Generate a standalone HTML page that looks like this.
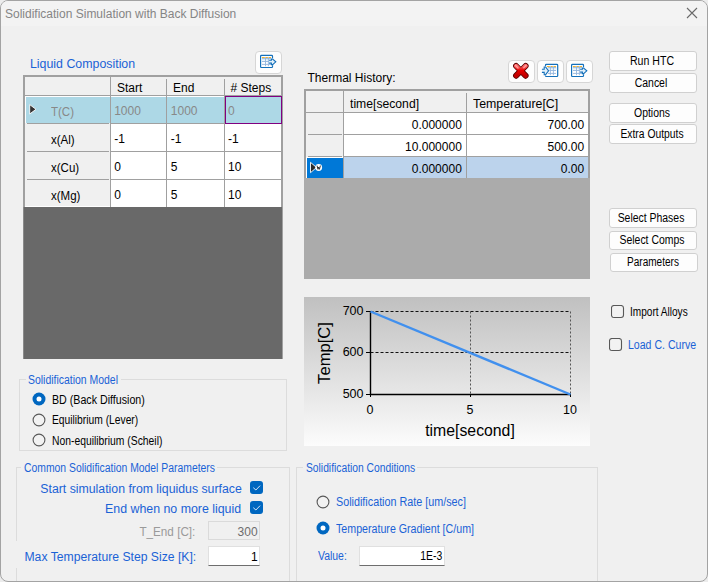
<!DOCTYPE html>
<html><head><meta charset="utf-8"><style>
html,body{margin:0;padding:0;}
html{background:#ececec;}
body{width:708px;height:582px;position:relative;overflow:hidden;font-family:"Liberation Sans", sans-serif;}
.win{position:absolute;left:0;top:0;width:708px;height:582px;box-sizing:border-box;border:1px solid #a3a3a3;border-radius:8px;background:#f0f0f0;overflow:hidden;}
.r{position:absolute;}
.t{position:absolute;white-space:nowrap;font-family:"Liberation Sans", sans-serif;}
</style></head><body><div class="win"><div style="position:absolute;left:-1px;top:-1px;width:708px;height:582px;">
<div class="r" style="left:0px;top:0px;width:708px;height:26px;background:#f3f3f3;"></div>
<div class="t" style="left:5px;top:7.84px;font-size:12px;line-height:12px;color:#858585;">Solidification Simulation with Back Diffusion</div>
<svg class="r" style="left:686px;top:7px" width="12" height="12"><path d="M1 1L11 11M11 1L1 11" stroke="#6a6a6a" stroke-width="1.1"/></svg>
<div class="t" style="left:29.8px;top:57.84px;font-size:12px;line-height:12px;color:#1a62d6;transform:scaleX(1.03);transform-origin:left;">Liquid Composition</div>
<div class="r" style="left:255px;top:51px;width:27px;height:23px;background:#fdfdfd;border:1px solid #d6d6d6;border-radius:4px;box-sizing:border-box;"></div>
<svg class="r" style="left:257px;top:52px" width="22" height="19" viewBox="0 0 22 19">
<rect x="3.6" y="3.4" width="11.9" height="12.1" rx="0.8" fill="#fff" stroke="#1570ba" stroke-width="1.2"/>
<path d="M5 5.5H7.8M9 5.5H10.9M12 5.5H14" stroke="#f5b52e" stroke-width="1.1"/>
<rect x="4.5" y="6.2" width="10" height="2.4" fill="#e3f2fc"/>
<path d="M5 6.6H14M5 9.5H14M5 12.4H14M8.5 5V14.2M11.4 5V14.2" stroke="#93b6dc" stroke-width="0.9"/>
<path d="M12 7.5H14V6.3H16L19.8 9.8L16 13.3H14V11.8H12Z" fill="#fff"/>
<path d="M12.1 8.2H14.4V7H15.6L18.8 9.8L15.6 12.6H14.4V11.1H12.1" fill="#e0f0fb" stroke="#1570ba" stroke-width="1.1"/>
</svg>
<div class="r" style="left:23px;top:75px;width:260px;height:284px;background:#f0f0f0;border:2px solid #a0a0a0;border-bottom:none;box-sizing:border-box;"></div>
<div class="r" style="left:23px;top:207px;width:259px;height:152px;background:#696969;"></div>
<div class="r" style="left:23px;top:207px;width:1px;height:152px;background:#8a8a8a;"></div>
<div class="r" style="left:25px;top:95px;width:256px;height:1px;background:#a0a0a0;"></div>
<div class="r" style="left:111px;top:124px;width:170px;height:83px;background:#fff;"></div>
<div class="r" style="left:25px;top:96px;width:257px;height:27px;background:#fff;"></div>
<div class="r" style="left:26px;top:97px;width:255px;height:26px;background:#add8e6;"></div>
<div class="r" style="left:111px;top:123px;width:170px;height:1px;background:#a0a0a0;"></div>
<div class="r" style="left:27px;top:123px;width:82px;height:1px;background:#a0a0a0;"></div>
<div class="r" style="left:111px;top:151px;width:170px;height:1px;background:#a0a0a0;"></div>
<div class="r" style="left:27px;top:151px;width:82px;height:1px;background:#a0a0a0;"></div>
<div class="r" style="left:111px;top:179px;width:170px;height:1px;background:#a0a0a0;"></div>
<div class="r" style="left:27px;top:179px;width:82px;height:1px;background:#a0a0a0;"></div>
<div class="r" style="left:25px;top:206px;width:256px;height:1px;background:#fff;"></div>
<div class="r" style="left:110px;top:77px;width:1px;height:130px;background:#a0a0a0;"></div>
<div class="r" style="left:166px;top:79px;width:1px;height:16px;background:#a0a0a0;"></div>
<div class="r" style="left:166px;top:96px;width:1px;height:111px;background:#a0a0a0;"></div>
<div class="r" style="left:224px;top:79px;width:1px;height:16px;background:#a0a0a0;"></div>
<div class="r" style="left:224px;top:96px;width:1px;height:111px;background:#a0a0a0;"></div>
<div class="r" style="left:225px;top:96px;width:57px;height:28px;border:1px solid #800080;box-sizing:border-box;"></div>
<svg class="r" style="left:28px;top:103px" width="11" height="13"><path d="M1.7 1.6L8 6.3L1.7 11Z" fill="#333" stroke="#fff" stroke-width="0.9"/></svg>
<div class="t" style="left:117px;top:82.14px;font-size:12px;line-height:12px;color:#000;">Start</div>
<div class="t" style="left:173px;top:82.14px;font-size:12px;line-height:12px;color:#000;">End</div>
<div class="t" style="left:230.5px;top:82.14px;font-size:12px;line-height:12px;color:#000;"># Steps</div>
<div class="t" style="left:51.2px;top:105.84px;font-size:12px;line-height:12px;color:#888;transform:scaleX(0.96);transform-origin:left;">T(C)</div>
<div class="t" style="left:114.2px;top:104.84px;font-size:12px;line-height:12px;color:#888;">1000</div>
<div class="t" style="left:170.8px;top:104.84px;font-size:12px;line-height:12px;color:#888;">1000</div>
<div class="t" style="left:228px;top:104.84px;font-size:12px;line-height:12px;color:#888;">0</div>
<div class="t" style="left:51.2px;top:133.84px;font-size:12px;line-height:12px;color:#000;transform:scaleX(0.96);transform-origin:left;">x(Al)</div>
<div class="t" style="left:114.2px;top:132.84px;font-size:12px;line-height:12px;color:#000;">-1</div>
<div class="t" style="left:170.8px;top:132.84px;font-size:12px;line-height:12px;color:#000;">-1</div>
<div class="t" style="left:228px;top:132.84px;font-size:12px;line-height:12px;color:#000;">-1</div>
<div class="t" style="left:51.2px;top:161.84px;font-size:12px;line-height:12px;color:#000;transform:scaleX(0.96);transform-origin:left;">x(Cu)</div>
<div class="t" style="left:114.2px;top:160.84px;font-size:12px;line-height:12px;color:#000;">0</div>
<div class="t" style="left:170.8px;top:160.84px;font-size:12px;line-height:12px;color:#000;">5</div>
<div class="t" style="left:228px;top:160.84px;font-size:12px;line-height:12px;color:#000;">10</div>
<div class="t" style="left:51.2px;top:189.84px;font-size:12px;line-height:12px;color:#000;transform:scaleX(0.96);transform-origin:left;">x(Mg)</div>
<div class="t" style="left:114.2px;top:188.84px;font-size:12px;line-height:12px;color:#000;">0</div>
<div class="t" style="left:170.8px;top:188.84px;font-size:12px;line-height:12px;color:#000;">5</div>
<div class="t" style="left:228px;top:188.84px;font-size:12px;line-height:12px;color:#000;">10</div>
<div class="r" style="left:19px;top:379px;width:268px;height:72px;border:1px solid #dcdcdc;box-sizing:border-box;"></div>
<div class="r" style="left:25.9px;top:378px;width:95px;height:3px;background:#f0f0f0;"></div>
<div class="t" style="left:27.8px;top:373.84px;font-size:12px;line-height:12px;color:#1a62d6;transform:scaleX(0.87);transform-origin:left;">Solidification Model</div>
<svg class="r" style="left:32.4px;top:392.4px" width="14" height="14"><circle cx="7" cy="7" r="6.5" fill="#0067c0"/><circle cx="7" cy="7" r="2.5" fill="#fff"/></svg>
<svg class="r" style="left:32.4px;top:412.5px" width="14" height="14"><circle cx="7" cy="7" r="5.9" fill="#f2f2f2" stroke="#585858" stroke-width="1.1"/></svg>
<svg class="r" style="left:32.4px;top:433.4px" width="14" height="14"><circle cx="7" cy="7" r="5.9" fill="#f2f2f2" stroke="#585858" stroke-width="1.1"/></svg>
<div class="t" style="left:52.2px;top:394.14px;font-size:12px;line-height:12px;color:#000;transform:scaleX(0.888);transform-origin:left;">BD (Back Diffusion)</div>
<div class="t" style="left:52.2px;top:414.34px;font-size:12px;line-height:12px;color:#000;transform:scaleX(0.856);transform-origin:left;">Equilibrium (Lever)</div>
<div class="t" style="left:52.2px;top:434.84px;font-size:12px;line-height:12px;color:#000;transform:scaleX(0.862);transform-origin:left;">Non-equilibrium (Scheil)</div>
<div class="r" style="left:16px;top:467px;width:274px;height:133px;border:1px solid #dcdcdc;box-sizing:border-box;"></div>
<div class="r" style="left:21.4px;top:466px;width:196px;height:3px;background:#f0f0f0;"></div>
<div class="t" style="left:24px;top:461.84px;font-size:12px;line-height:12px;color:#1a62d6;transform:scaleX(0.865);transform-origin:left;">Common Solidification Model Parameters</div>
<div class="r" style="left:15px;top:541px;width:3px;height:27px;background:#f0f0f0;"></div>
<div class="t" style="right:466.5px;top:483.14px;font-size:12px;line-height:12px;color:#1a62d6;transform:scaleX(1.024);transform-origin:right;">Start simulation from liquidus surface</div>
<svg class="r" style="left:250px;top:481px" width="13" height="13"><rect x="0" y="0" width="13" height="13" rx="3" fill="#0067c0"/><path d="M3.3 6.7L5.9 9L10.1 4.6" fill="none" stroke="#d8e6f6" stroke-width="1"/></svg>
<div class="t" style="right:466.5px;top:503.04px;font-size:12px;line-height:12px;color:#1a62d6;transform:scaleX(1.03);transform-origin:right;">End when no more liquid</div>
<svg class="r" style="left:250px;top:501px" width="13" height="13"><rect x="0" y="0" width="13" height="13" rx="3" fill="#0067c0"/><path d="M3.3 6.7L5.9 9L10.1 4.6" fill="none" stroke="#d8e6f6" stroke-width="1"/></svg>
<div class="t" style="right:513px;top:525.54px;font-size:12px;line-height:12px;color:#9a9a9a;transform:scaleX(0.976);transform-origin:right;">T_End [C]:</div>
<div class="r" style="left:208px;top:521px;width:52px;height:19px;background:#f0f0f0;border:1px solid #dadada;box-sizing:border-box;"></div>
<div class="t" style="right:450.4px;top:526.14px;font-size:12px;line-height:12px;color:#6d6d6d;">300</div>
<div class="t" style="right:512px;top:551.34px;font-size:12px;line-height:12px;color:#1a62d6;transform:scaleX(1.015);transform-origin:right;">Max Temperature Step Size [K]:</div>
<div class="r" style="left:208px;top:546px;width:52px;height:20px;background:#fff;border:1px solid #e0e0e0;border-bottom:1px solid #6e6e6e;box-sizing:border-box;"></div>
<div class="t" style="right:450.4px;top:551.04px;font-size:12px;line-height:12px;color:#000;">1</div>
<div class="t" style="left:307.5px;top:71.74px;font-size:12px;line-height:12px;color:#000;">Thermal History:</div>
<div class="r" style="left:508px;top:60px;width:27px;height:23px;background:#fdfdfd;border:1px solid #d6d6d6;border-radius:4px;box-sizing:border-box;"></div>
<svg class="r" style="left:508px;top:60px" width="26" height="23" viewBox="0 0 26 23">
<defs><linearGradient id="xg" x1="0" y1="0" x2="0" y2="1"><stop offset="0" stop-color="#ff6a6a"/><stop offset="0.45" stop-color="#e80000"/><stop offset="1" stop-color="#c00000"/></linearGradient></defs>
<path d="M8.1 6L17.6 15.7M17.6 6L8.1 15.7" stroke="#5a0000" stroke-width="6" stroke-linecap="round"/>
<path d="M8.1 6L17.6 15.7M17.6 6L8.1 15.7" stroke="url(#xg)" stroke-width="4.4" stroke-linecap="round"/>
<path d="M7.6 5.6L10 8M18 5.6L15.8 7.8" stroke="#ffb0b0" stroke-width="1.4" stroke-linecap="round" opacity="0.8"/>
</svg>
<div class="r" style="left:537px;top:60px;width:27px;height:23px;background:#fdfdfd;border:1px solid #d6d6d6;border-radius:4px;box-sizing:border-box;"></div>
<svg class="r" style="left:539px;top:61px" width="22" height="19" viewBox="0 0 22 19">
<rect x="6.5" y="3.4" width="12.2" height="12.1" rx="0.8" fill="#fff" stroke="#1570ba" stroke-width="1.2"/>
<path d="M8 5.5H10.8M12 5.5H13.8M15 5.5H17" stroke="#f5b52e" stroke-width="1.1"/>
<rect x="7.5" y="6.2" width="10" height="2.4" fill="#e3f2fc"/>
<path d="M9 6.6H17M9 9.5H17M9 12.4H17M11.4 5V14.2M14.4 5V14.2" stroke="#93b6dc" stroke-width="0.9"/>
<path d="M1.5 7.5H4.6V5.3H7L10.6 9.8L7 14.4H4.6V12.2H1.5Z" fill="#fff"/>
<path d="M2.9 8.3H5.2V6H6.6L9.6 9.8L6.6 13.7H5.2V11.4H2.9" fill="#e0f0fb" stroke="#1570ba" stroke-width="1.1"/>
</svg>
<div class="r" style="left:566px;top:60px;width:27px;height:23px;background:#fdfdfd;border:1px solid #d6d6d6;border-radius:4px;box-sizing:border-box;"></div>
<svg class="r" style="left:568px;top:61px" width="22" height="19" viewBox="0 0 22 19">
<rect x="3.6" y="3.4" width="11.9" height="12.1" rx="0.8" fill="#fff" stroke="#1570ba" stroke-width="1.2"/>
<path d="M5 5.5H7.8M9 5.5H10.9M12 5.5H14" stroke="#f5b52e" stroke-width="1.1"/>
<rect x="4.5" y="6.2" width="10" height="2.4" fill="#e3f2fc"/>
<path d="M5 6.6H14M5 9.5H14M5 12.4H14M8.5 5V14.2M11.4 5V14.2" stroke="#93b6dc" stroke-width="0.9"/>
<path d="M12 7.5H14V6.3H16L19.8 9.8L16 13.3H14V11.8H12Z" fill="#fff"/>
<path d="M12.1 8.2H14.4V7H15.6L18.8 9.8L15.6 12.6H14.4V11.1H12.1" fill="#e0f0fb" stroke="#1570ba" stroke-width="1.1"/>
</svg>
<div class="r" style="left:304px;top:89px;width:286px;height:190px;background:#ababab;"></div>
<div class="r" style="left:304px;top:89px;width:286px;height:89px;background:#f0f0f0;border:2px solid #a0a0a0;border-bottom:none;box-sizing:border-box;"></div>
<div class="r" style="left:306px;top:112px;width:282px;height:1px;background:#a0a0a0;"></div>
<div class="r" style="left:344px;top:113px;width:244px;height:43px;background:#fff;"></div>
<div class="r" style="left:344px;top:134px;width:244px;height:1px;background:#a0a0a0;"></div>
<div class="r" style="left:308px;top:134px;width:34px;height:1px;background:#a0a0a0;"></div>
<div class="r" style="left:308px;top:156px;width:34px;height:1px;background:#a0a0a0;"></div>
<div class="r" style="left:344px;top:156px;width:244px;height:1px;background:#a0a0a0;"></div>
<div class="r" style="left:306px;top:157px;width:37px;height:21px;background:#fff;"></div>
<div class="r" style="left:307px;top:158px;width:36px;height:20px;background:#0078d7;"></div>
<div class="r" style="left:344px;top:157px;width:244px;height:21px;background:#bcd3ec;"></div>
<div class="r" style="left:343px;top:91px;width:1px;height:87px;background:#a0a0a0;"></div>
<div class="r" style="left:466px;top:93px;width:1px;height:19px;background:#a0a0a0;"></div>
<div class="r" style="left:466px;top:113px;width:1px;height:65px;background:#a0a0a0;"></div>
<div class="t" style="left:349.9px;top:97.64px;font-size:12px;line-height:12px;color:#000;transform:scaleX(1.015);transform-origin:left;">time[second]</div>
<div class="t" style="left:473.2px;top:97.64px;font-size:12px;line-height:12px;color:#000;transform:scaleX(1.03);transform-origin:left;">Temperature[C]</div>
<div class="t" style="right:246.2px;top:119.14px;font-size:12px;line-height:12px;color:#000;">0.000000</div>
<div class="t" style="right:123.79999999999995px;top:119.14px;font-size:12px;line-height:12px;color:#000;">700.00</div>
<div class="t" style="right:246.2px;top:141.14px;font-size:12px;line-height:12px;color:#000;">10.000000</div>
<div class="t" style="right:123.79999999999995px;top:141.14px;font-size:12px;line-height:12px;color:#000;">500.00</div>
<div class="t" style="right:246.2px;top:163.14px;font-size:12px;line-height:12px;color:#000;">0.000000</div>
<div class="t" style="right:123.79999999999995px;top:163.14px;font-size:12px;line-height:12px;color:#000;">0.00</div>
<svg class="r" style="left:309px;top:161px" width="15" height="13"><path d="M1.5 1.3L7.5 6.5L1.5 11.7Z" fill="#2a2a2a" stroke="#fff" stroke-width="0.9"/><circle cx="9.7" cy="6.5" r="3.4" fill="#fff"/><path d="M8 4.6L9 8.3L9.7 6L10.4 8.3L11.4 4.6" fill="none" stroke="#333" stroke-width="1"/></svg>
<div class="r" style="left:304px;top:297px;width:286px;height:149px;background:linear-gradient(#c0c0c0,#fcfcfc);"></div>
<svg class="r" style="left:304px;top:297px" width="286" height="149" viewBox="0 0 286 149">
<path d="M66.5 14.5H266.5M66.5 55.5H266.5" stroke="#111" stroke-width="1" stroke-dasharray="3 2"/>
<path d="M166.5 14.5V97M266.5 14.5V97" stroke="#555" stroke-width="1" stroke-dasharray="2 2"/>
<path d="M66.5 14V97.5H267" stroke="#000" stroke-width="1.4" fill="none"/>
<path d="M62 14.5H66.5M62 55.5H66.5M62 97.5H66.5M166.5 97V100M266.5 97V100M66.5 97V100" stroke="#000" stroke-width="1"/>
<path d="M66.5 14.5L266.5 97.5" stroke="#4190ee" stroke-width="2.4"/>
</svg>
<div class="t" style="right:344.5px;top:304.92px;font-size:12.5px;line-height:12.5px;color:#000;">700</div>
<div class="t" style="right:344.5px;top:346.42px;font-size:12.5px;line-height:12.5px;color:#000;">600</div>
<div class="t" style="right:344.5px;top:387.92px;font-size:12.5px;line-height:12.5px;color:#000;">500</div>
<div class="t" style="left:370px;top:404.12px;font-size:12.5px;line-height:12.5px;color:#000;transform:translateX(-50%) scaleX(1.0);transform-origin:center;">0</div>
<div class="t" style="left:470px;top:404.12px;font-size:12.5px;line-height:12.5px;color:#000;transform:translateX(-50%) scaleX(1.0);transform-origin:center;">5</div>
<div class="t" style="left:570px;top:404.12px;font-size:12.5px;line-height:12.5px;color:#000;transform:translateX(-50%) scaleX(1.0);transform-origin:center;">10</div>
<div class="t" style="left:470px;top:423.13px;font-size:15.8px;line-height:15.8px;color:#000;transform:translateX(-50%) scaleX(1.0);transform-origin:center;">time[second]</div>
<div class="t" style="left:325px;top:352.5px;font-size:16.6px;line-height:16.6px;transform:translate(-50%,-50%) rotate(-90deg);">Temp[C]</div>
<div class="r" style="left:296px;top:467px;width:302px;height:133px;border:1px solid #dcdcdc;box-sizing:border-box;"></div>
<div class="r" style="left:303.0px;top:466px;width:114px;height:3px;background:#f0f0f0;"></div>
<div class="t" style="left:305.6px;top:461.84px;font-size:12px;line-height:12px;color:#1a62d6;transform:scaleX(0.857);transform-origin:left;">Solidification Conditions</div>
<svg class="r" style="left:316.2px;top:494.5px" width="14" height="14"><circle cx="7" cy="7" r="5.9" fill="#f2f2f2" stroke="#585858" stroke-width="1.1"/></svg>
<div class="t" style="left:336px;top:496.14px;font-size:12px;line-height:12px;color:#1a62d6;transform:scaleX(0.898);transform-origin:left;">Solidification Rate [um/sec]</div>
<svg class="r" style="left:316.2px;top:521.2px" width="14" height="14"><circle cx="7" cy="7" r="6.5" fill="#0067c0"/><circle cx="7" cy="7" r="2.5" fill="#fff"/></svg>
<div class="t" style="left:336px;top:522.64px;font-size:12px;line-height:12px;color:#1a62d6;transform:scaleX(0.888);transform-origin:left;">Temperature Gradient [C/um]</div>
<div class="t" style="left:317.7px;top:549.84px;font-size:12px;line-height:12px;color:#1a62d6;transform:scaleX(0.87);transform-origin:left;">Value:</div>
<div class="r" style="left:359px;top:546px;width:86px;height:20px;background:#fff;border:1px solid #e0e0e0;border-bottom:1px solid #6e6e6e;box-sizing:border-box;"></div>
<div class="t" style="right:266px;top:550.34px;font-size:12px;line-height:12px;color:#000;transform:scaleX(0.87);transform-origin:right;">1E-3</div>
<div class="r" style="left:609px;top:51px;width:88px;height:20px;background:#fdfdfd;border:1px solid #d0d0d0;border-radius:3px;box-sizing:border-box;"></div>
<div class="t" style="left:651.5px;top:54.64px;font-size:12px;line-height:12px;color:#000;transform:translateX(-50%) scaleX(0.88);transform-origin:center;">Run HTC</div>
<div class="r" style="left:609px;top:73px;width:88px;height:20px;background:#fdfdfd;border:1px solid #d0d0d0;border-radius:3px;box-sizing:border-box;"></div>
<div class="t" style="left:651.3px;top:76.64px;font-size:12px;line-height:12px;color:#000;transform:translateX(-50%) scaleX(0.87);transform-origin:center;">Cancel</div>
<div class="r" style="left:609px;top:103px;width:88px;height:20px;background:#fdfdfd;border:1px solid #d0d0d0;border-radius:3px;box-sizing:border-box;"></div>
<div class="t" style="left:651.5px;top:106.64px;font-size:12px;line-height:12px;color:#000;transform:translateX(-50%) scaleX(0.87);transform-origin:center;">Options</div>
<div class="r" style="left:609px;top:124px;width:88px;height:20px;background:#fdfdfd;border:1px solid #d0d0d0;border-radius:3px;box-sizing:border-box;"></div>
<div class="t" style="left:651.6px;top:127.64px;font-size:12px;line-height:12px;color:#000;transform:translateX(-50%) scaleX(0.86);transform-origin:center;">Extra Outputs</div>
<div class="r" style="left:609px;top:208px;width:88px;height:20px;background:#fdfdfd;border:1px solid #d0d0d0;border-radius:3px;box-sizing:border-box;"></div>
<div class="t" style="left:651.1px;top:211.74px;font-size:12px;line-height:12px;color:#000;transform:translateX(-50%) scaleX(0.87);transform-origin:center;">Select Phases</div>
<div class="r" style="left:609px;top:231px;width:88px;height:19px;background:#fdfdfd;border:1px solid #d0d0d0;border-radius:3px;box-sizing:border-box;"></div>
<div class="t" style="left:651.9px;top:233.94px;font-size:12px;line-height:12px;color:#000;transform:translateX(-50%) scaleX(0.87);transform-origin:center;">Select Comps</div>
<div class="r" style="left:610px;top:253px;width:88px;height:19px;background:#fdfdfd;border:1px solid #d0d0d0;border-radius:3px;box-sizing:border-box;"></div>
<div class="t" style="left:652.7px;top:255.64px;font-size:12px;line-height:12px;color:#000;transform:translateX(-50%) scaleX(0.836);transform-origin:center;">Parameters</div>
<svg class="r" style="left:611px;top:305px" width="14" height="14"><rect x="0.5" y="0.5" width="12" height="12" rx="2.5" fill="#f2f2f2" stroke="#585858" stroke-width="1.1"/></svg>
<div class="t" style="left:630.2px;top:305.84px;font-size:12px;line-height:12px;color:#000;transform:scaleX(0.84);transform-origin:left;">Import Alloys</div>
<svg class="r" style="left:609px;top:338px" width="14" height="14"><rect x="0.5" y="0.5" width="12" height="12" rx="2.5" fill="#f2f2f2" stroke="#585858" stroke-width="1.1"/></svg>
<div class="t" style="left:628.2px;top:338.84px;font-size:12px;line-height:12px;color:#1a62d6;transform:scaleX(0.88);transform-origin:left;">Load C. Curve</div>
</div></div></body></html>
